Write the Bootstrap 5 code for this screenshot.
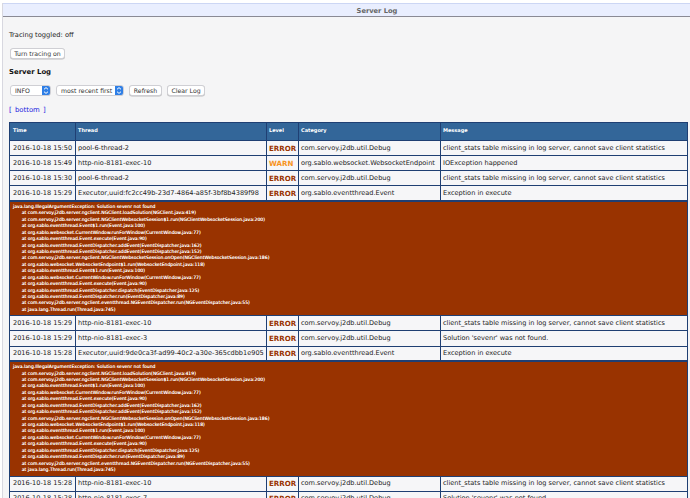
<!DOCTYPE html>
<html lang="en">
<head>
<meta charset="utf-8">
<title>Server Log</title>
<link href="https://cdn.jsdelivr.net/npm/bootstrap@5.3.0/dist/css/bootstrap.min.css" rel="stylesheet">
<style>
html,body{height:498px;overflow:hidden;background:#fff}
body{font-family:"DejaVu Sans","Liberation Sans",sans-serif;font-size:6.7px;color:#222;padding-top:3px;text-rendering:geometricPrecision}
.win{height:495px;margin-left:2px;background:#f5f5f6;border-left:1px solid #d8d8e0;overflow:hidden}
.titlebar{height:14px;background:#e9eefe;border-top:1px solid #ccd6f4;border-bottom:1px solid #8a8a94;color:#666;font-weight:700;font-size:6.7px;line-height:15px;text-align:center;padding-left:61px}
.pane{padding:12px 2px 0 6px}
.status{height:12px;line-height:12px;margin-bottom:7px}
.mini-btn{font-size:6.2px;line-height:9px;padding:0;height:11px;white-space:nowrap;background:#fff;border:1px solid #cfcfd4;border-radius:3px;color:#333;box-shadow:0 .5px 0 #bbb}
.mini-btn:hover{background:#fff;border-color:#cfcfd4;color:#333}
.first-btn{margin-left:1px;width:55px}
.refresh-btn{width:33px}.clear-btn{width:38px}
.subhead{font-size:6.9px;font-weight:700;line-height:12px;margin:7px 0 6px;color:#111}
.tools{gap:5px;height:12px;margin-bottom:8px;padding-left:1px}
.pick{appearance:none;-webkit-appearance:none;font-family:inherit;font-size:6.2px;line-height:9px;height:11px;padding:0 10px 0 4px;border:1px solid #cfcfd4;border-radius:3px;color:#333;background-color:#fff;background-image:url("data:image/svg+xml,%3Csvg xmlns='http://www.w3.org/2000/svg' viewBox='0 0 8 11'%3E%3Crect width='8' height='11' fill='%232f7fe6'/%3E%3Cpath d='M2 4.3 4 2.6 6 4.3M2 6.7 4 8.4 6 6.7' fill='none' stroke='%23fff'/%3E%3C/svg%3E");background-repeat:no-repeat;background-position:right center;background-size:8px 11px}
.pick-a{width:41px}.pick-b{width:68px}
.bottom-link{display:block;height:12px;line-height:12px;margin-bottom:6px;color:#1a1ae0;font-size:6.9px}
.bottom-link a{color:#1a1ae0;text-decoration:none;margin:0 1px}
.logtable{width:678px;table-layout:fixed;border-collapse:collapse;background:#f6f6f8;margin:0}
.logtable th,.logtable td{border:1px solid #1f3f73;padding:0 2px;white-space:nowrap;overflow:hidden;vertical-align:middle}
.logtable th{background:#336699;color:#fff;font-size:5px;font-weight:700;height:18px}
.logtable th:first-child,.logtable td:first-child{padding-left:3px}
.logtable td{height:15.1px;font-size:6.57px;line-height:13px;color:#222}
.logtable td.lvl{font-weight:700;font-size:7.1px;color:#993300}
.logtable td.lvl.warnlvl{color:#f7931e}
.logtable td.trace{background:#993300;color:#fff;font-size:4.56px;line-height:6.43px;height:auto;padding:3px 2px 1px 3px;white-space:pre;border-top:2px solid #1f3f73;border-bottom:0;text-shadow:0 0 .3px #fff}
</style>
</head>
<body>
<div class="win">
  <div class="titlebar">Server Log</div>
  <div class="pane">
    <div class="status">Tracing toggled: off</div>
    <button type="button" class="btn mini-btn d-block first-btn">Turn tracing on</button>
    <div class="subhead">Server Log</div>
    <div class="d-flex align-items-center tools">
      <select class="pick pick-a"><option>INFO</option></select>
      <select class="pick pick-b"><option>most recent first</option></select>
      <button type="button" class="btn mini-btn refresh-btn">Refresh</button>
      <button type="button" class="btn mini-btn clear-btn">Clear Log</button>
    </div>
    <div class="bottom-link">[ <a href="#">bottom</a> ]</div>
    <table class="logtable">
      <colgroup><col style="width:66px"><col style="width:191px"><col style="width:32px"><col style="width:142px"><col style="width:247px"></colgroup>
      <thead><tr><th>Time</th><th>Thread</th><th>Level</th><th>Category</th><th>Message</th></tr></thead>
      <tbody>
        <tr><td>2016-10-18 15:50</td><td>pool-6-thread-2</td><td class="lvl">ERROR</td><td>com.servoy.j2db.util.Debug</td><td>client_stats table missing in log server, cannot save client statistics</td></tr>
        <tr><td>2016-10-18 15:49</td><td>http-nio-8181-exec-10</td><td class="lvl warnlvl">WARN</td><td>org.sablo.websocket.WebsocketEndpoint</td><td>IOException happened</td></tr>
        <tr><td>2016-10-18 15:30</td><td>pool-6-thread-2</td><td class="lvl">ERROR</td><td>com.servoy.j2db.util.Debug</td><td>client_stats table missing in log server, cannot save client statistics</td></tr>
        <tr><td>2016-10-18 15:29</td><td>Executor,uuid:fc2cc49b-23d7-4864-a85f-3bf8b4389f98</td><td class="lvl">ERROR</td><td>org.sablo.eventthread.Event</td><td>Exception in execute</td></tr>
        <tr><td colspan="5" class="trace">java.lang.IllegalArgumentException: Solution sevenr not found
      at com.servoy.j2db.server.ngclient.NGClient.loadSolution(NGClient.java:419)
      at com.servoy.j2db.server.ngclient.NGClientWebsocketSession$1.run(NGClientWebsocketSession.java:200)
      at org.sablo.eventthread.Event$1.run(Event.java:100)
      at org.sablo.websocket.CurrentWindow.runForWindow(CurrentWindow.java:77)
      at org.sablo.eventthread.Event.execute(Event.java:90)
      at org.sablo.eventthread.EventDispatcher.addEvent(EventDispatcher.java:162)
      at org.sablo.eventthread.EventDispatcher.addEvent(EventDispatcher.java:152)
      at com.servoy.j2db.server.ngclient.NGClientWebsocketSession.onOpen(NGClientWebsocketSession.java:186)
      at org.sablo.websocket.WebsocketEndpoint$1.run(WebsocketEndpoint.java:118)
      at org.sablo.eventthread.Event$1.run(Event.java:100)
      at org.sablo.websocket.CurrentWindow.runForWindow(CurrentWindow.java:77)
      at org.sablo.eventthread.Event.execute(Event.java:90)
      at org.sablo.eventthread.EventDispatcher.dispatch(EventDispatcher.java:125)
      at org.sablo.eventthread.EventDispatcher.run(EventDispatcher.java:89)
      at com.servoy.j2db.server.ngclient.eventthread.NGEventDispatcher.run(NGEventDispatcher.java:55)
      at java.lang.Thread.run(Thread.java:745)</td></tr>
        <tr><td>2016-10-18 15:29</td><td>http-nio-8181-exec-10</td><td class="lvl">ERROR</td><td>com.servoy.j2db.util.Debug</td><td>client_stats table missing in log server, cannot save client statistics</td></tr>
        <tr><td>2016-10-18 15:29</td><td>http-nio-8181-exec-3</td><td class="lvl">ERROR</td><td>com.servoy.j2db.util.Debug</td><td>Solution 'sevenr' was not found.</td></tr>
        <tr><td>2016-10-18 15:28</td><td>Executor,uuid:9de0ca3f-ad99-40c2-a30e-365cdbb1e905</td><td class="lvl">ERROR</td><td>org.sablo.eventthread.Event</td><td>Exception in execute</td></tr>
        <tr><td colspan="5" class="trace">java.lang.IllegalArgumentException: Solution sevenr not found
      at com.servoy.j2db.server.ngclient.NGClient.loadSolution(NGClient.java:419)
      at com.servoy.j2db.server.ngclient.NGClientWebsocketSession$1.run(NGClientWebsocketSession.java:200)
      at org.sablo.eventthread.Event$1.run(Event.java:100)
      at org.sablo.websocket.CurrentWindow.runForWindow(CurrentWindow.java:77)
      at org.sablo.eventthread.Event.execute(Event.java:90)
      at org.sablo.eventthread.EventDispatcher.addEvent(EventDispatcher.java:162)
      at org.sablo.eventthread.EventDispatcher.addEvent(EventDispatcher.java:152)
      at com.servoy.j2db.server.ngclient.NGClientWebsocketSession.onOpen(NGClientWebsocketSession.java:186)
      at org.sablo.websocket.WebsocketEndpoint$1.run(WebsocketEndpoint.java:118)
      at org.sablo.eventthread.Event$1.run(Event.java:100)
      at org.sablo.websocket.CurrentWindow.runForWindow(CurrentWindow.java:77)
      at org.sablo.eventthread.Event.execute(Event.java:90)
      at org.sablo.eventthread.EventDispatcher.dispatch(EventDispatcher.java:125)
      at org.sablo.eventthread.EventDispatcher.run(EventDispatcher.java:89)
      at com.servoy.j2db.server.ngclient.eventthread.NGEventDispatcher.run(NGEventDispatcher.java:55)
      at java.lang.Thread.run(Thread.java:745)</td></tr>
        <tr><td>2016-10-18 15:28</td><td>http-nio-8181-exec-10</td><td class="lvl">ERROR</td><td>com.servoy.j2db.util.Debug</td><td>client_stats table missing in log server, cannot save client statistics</td></tr>
        <tr><td>2016-10-18 15:28</td><td>http-nio-8181-exec-7</td><td class="lvl">ERROR</td><td>com.servoy.j2db.util.Debug</td><td>Solution 'sevenr' was not found.</td></tr>
      </tbody>
    </table>
  </div>
</div>
<script src="https://cdn.jsdelivr.net/npm/bootstrap@5.3.0/dist/js/bootstrap.bundle.min.js"></script>
</body>
</html>
